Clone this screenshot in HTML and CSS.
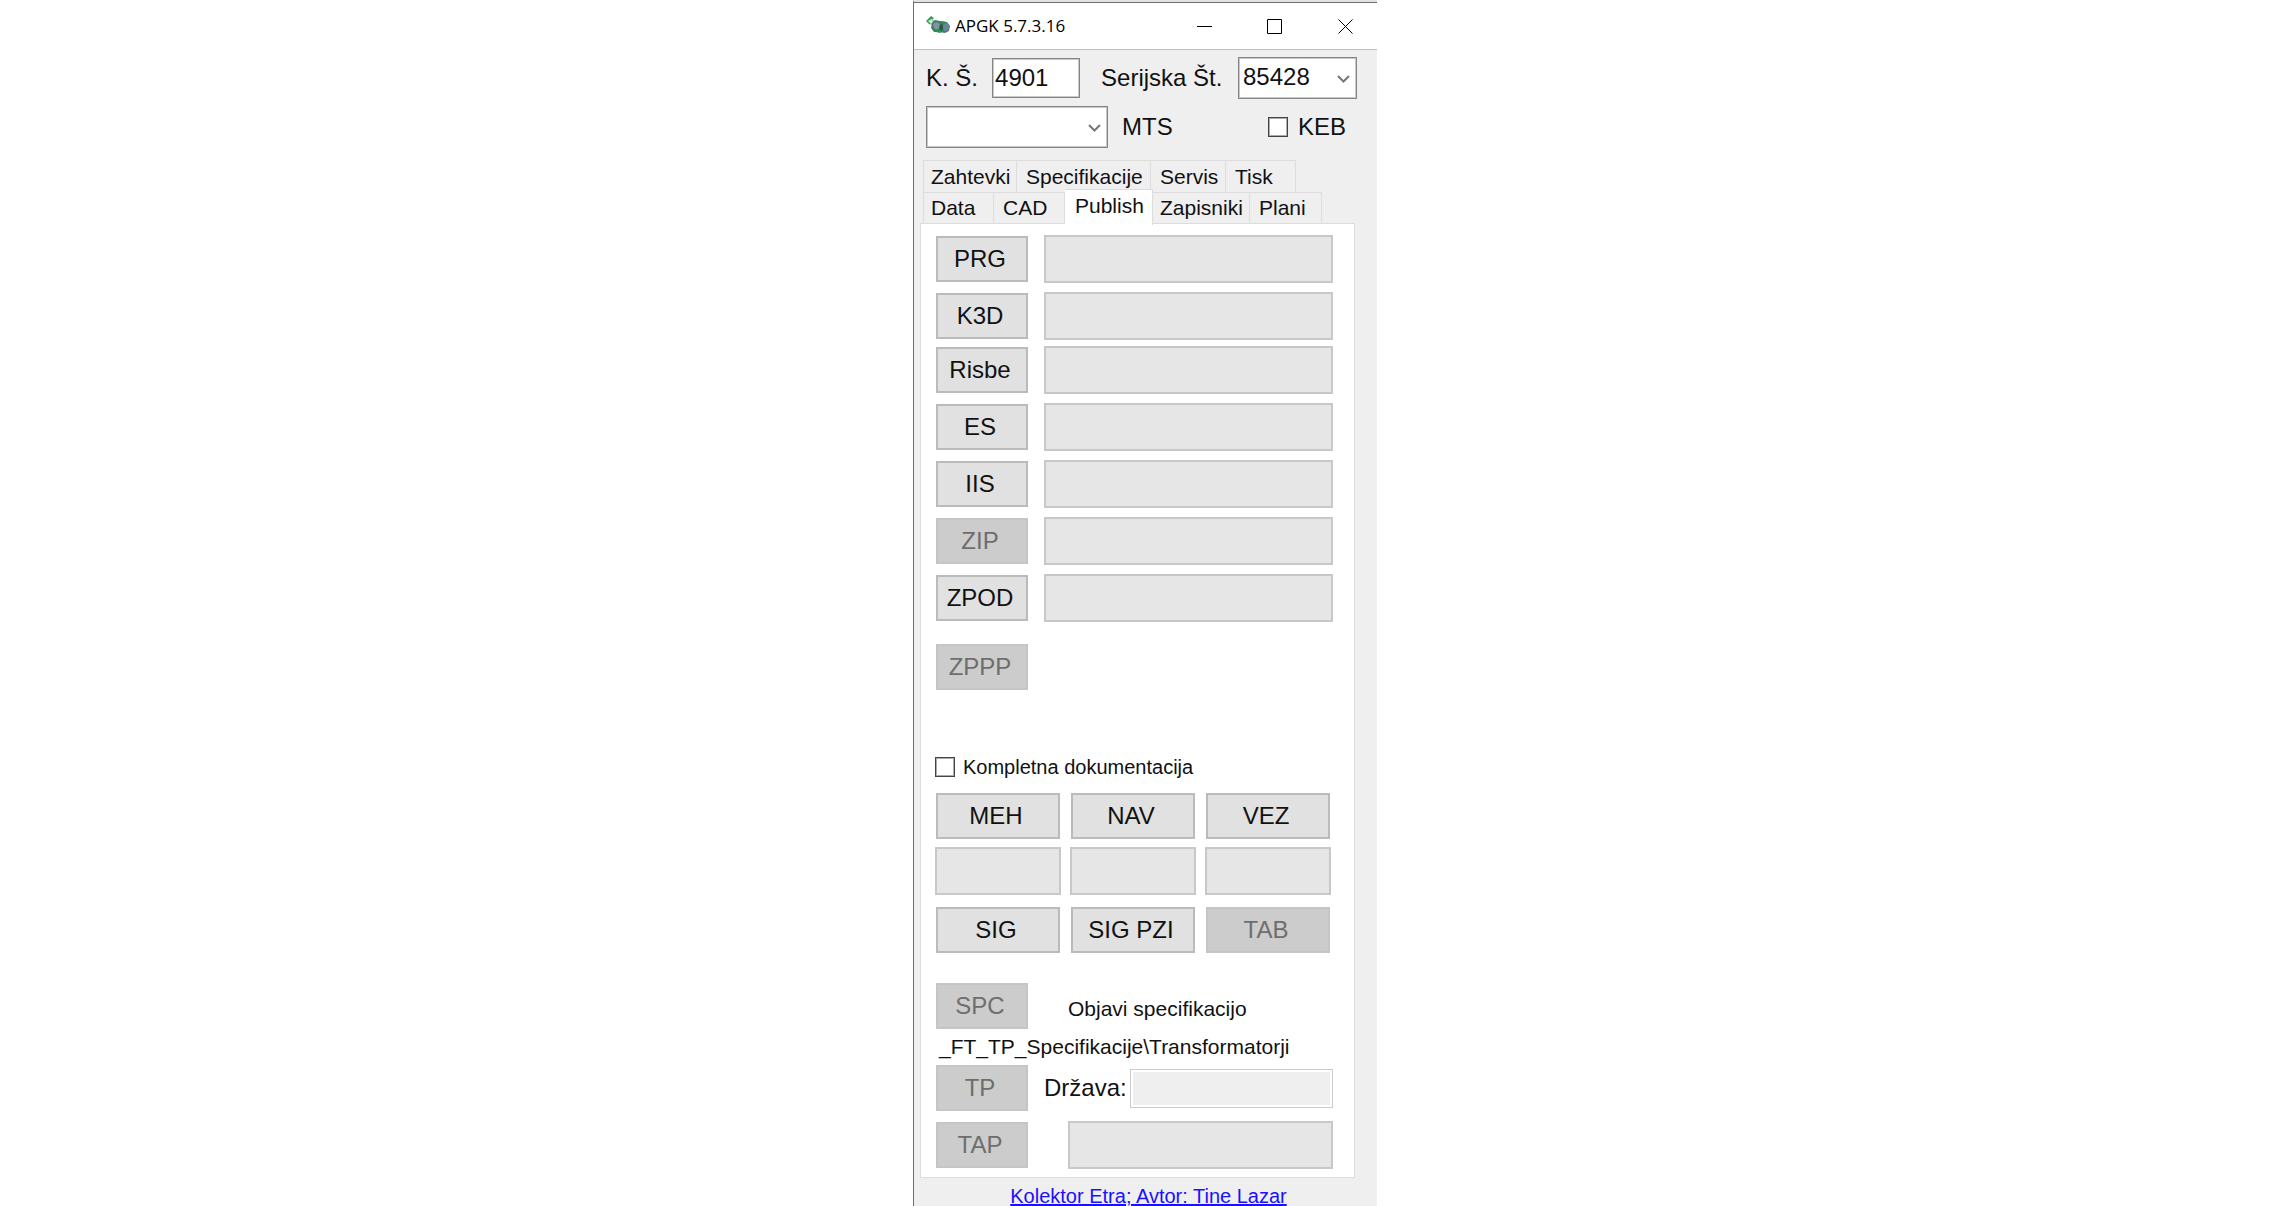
FILE: index.html
```
<!DOCTYPE html>
<html lang="sl">
<head>
<meta charset="utf-8">
<title>APGK 5.7.3.16</title>
<link rel="stylesheet" href="styles.css">
</head>
<body>
<div class="window">
  <header class="titlebar">
    <svg class="app-icon" viewBox="0 0 24 18" aria-hidden="true">
      <path d="M0 5L5 0l3 2-2 2 3 1-2 4-4-1z" fill="#2fa05a"/>
      <path d="M2 5l4-2 1 3-2 2z" fill="#d5eeda"/>
      <path d="M6 7l3-3 5 1 7 1 3 4-1 5-4 2-6-1-5 0-3-4z" fill="#4d7a66"/>
      <path d="M7 8l3-2 4 2v4l-3 2-3-2z" fill="#7d98a4"/>
      <ellipse cx="20" cy="11" rx="3" ry="4" fill="#6886a0"/>
      <path d="M9 14l5-2 3 3-3 2-4-1zM15 5l5 1-2 3-3-1z" fill="#1f9a4b"/>
      <path d="M14 8l3 1v4l-2 2-2-3z" fill="#305848"/>
    </svg>
    <h1 class="title">APGK 5.7.3.16</h1>
    <div class="window-buttons">
      <button class="window-button" type="button" aria-label="Minimize"><svg viewBox="0 0 15 15"><path d="M0 7.500h15"/></svg></button>
      <button class="window-button" type="button" aria-label="Maximize"><svg viewBox="0 0 15 15"><path d="M.5.5h14v14H.5z"/></svg></button>
      <button class="window-button" type="button" aria-label="Close"><svg viewBox="0 0 15 15"><path d="M.5.5l14 14M14.500.5l-14 14"/></svg></button>
    </div>
  </header>

  <form class="content">
    <div class="query">
      <label for="ks">K. Š.</label>
      <input class="input ks" id="ks" type="text" value="4901">
      <label class="serial-label" for="serial">Serijska Št.</label>
      <span class="select serial">
        <select id="serial"><option>85428</option></select>
        <svg class="chevron" viewBox="0 0 13 8" aria-hidden="true"><path d="M1 1l5.500 5.500L12 1"/></svg>
      </span>
    </div>
    <div class="query second">
      <span class="select mts">
        <select id="mts"><option></option></select>
        <svg class="chevron" viewBox="0 0 13 8" aria-hidden="true"><path d="M1 1l5.500 5.500L12 1"/></svg>
      </span>
      <label for="mts">MTS</label>
      <label class="check keb"><input type="checkbox">KEB</label>
    </div>

    <div class="tabs" role="tablist">
      <div class="tab-row upper">
        <button class="tab" type="button" role="tab">Zahtevki</button>
        <button class="tab wide" type="button" role="tab">Specifikacije</button>
        <button class="tab wide" type="button" role="tab">Servis</button>
        <button class="tab wide" type="button" role="tab">Tisk</button>
      </div>
      <div class="tab-row lower">
        <button class="tab" type="button" role="tab">Data</button>
        <button class="tab wide" type="button" role="tab">CAD</button>
        <button class="tab active" type="button" role="tab" aria-selected="true">Publish</button>
        <button class="tab" type="button" role="tab">Zapisniki</button>
        <button class="tab wide" type="button" role="tab">Plani</button>
      </div>
    </div>

    <div class="panel" role="tabpanel">
      <div class="jobs">
        <div class="job"><button class="button" type="button">PRG</button><progress value="0" aria-label="PRG"></progress></div>
        <div class="job tight"><button class="button" type="button">K3D</button><progress value="0" aria-label="K3D"></progress></div>
        <div class="job"><button class="button" type="button">Risbe</button><progress value="0" aria-label="Risbe"></progress></div>
        <div class="job"><button class="button" type="button">ES</button><progress value="0" aria-label="ES"></progress></div>
        <div class="job"><button class="button" type="button">IIS</button><progress value="0" aria-label="IIS"></progress></div>
        <div class="job"><button class="button" type="button" disabled>ZIP</button><progress value="0" aria-label="ZIP"></progress></div>
        <div class="job"><button class="button" type="button">ZPOD</button><progress value="0" aria-label="ZPOD"></progress></div>
      </div>
      <div class="job archive"><button class="button" type="button" disabled>ZPPP</button></div>

      <label class="check complete"><input type="checkbox">Kompletna dokumentacija</label>

      <div class="grid">
        <button class="button" type="button">MEH</button>
        <button class="button" type="button">NAV</button>
        <button class="button" type="button">VEZ</button>
      </div>
      <div class="grid meters">
        <progress value="0" aria-label="MEH"></progress>
        <progress value="0" aria-label="NAV"></progress>
        <progress value="0" aria-label="VEZ"></progress>
      </div>
      <div class="grid">
        <button class="button" type="button">SIG</button>
        <button class="button" type="button">SIG PZI</button>
        <button class="button" type="button" disabled>TAB</button>
      </div>

      <div class="job publish">
        <button class="button" type="button" disabled>SPC</button>
        <span class="note">Objavi specifikacijo</span>
      </div>
      <p class="path">_FT_TP_Specifikacije\Transformatorji</p>
      <div class="job country">
        <button class="button" type="button" disabled>TP</button>
        <label for="country">Država:</label>
        <input class="country-input" id="country" type="text" disabled>
      </div>
      <div class="job tap">
        <button class="button" type="button" disabled>TAP</button>
        <progress value="0" aria-label="TAP"></progress>
      </div>
    </div>
    <a class="credit" href="#">Kolektor Etra; Avtor: Tine Lazar</a>
  </form>
</div>
</body>
</html>
```
FILE: styles.css
```
* { box-sizing: border-box; }

body {
  margin: 0;
  background: #fff;
  color: #111;
  font: 24px/28px "Liberation Sans", Arial, sans-serif;
}

.window {
  max-width: 464px;
  min-height: 100vh;
  margin: 0 auto;
  overflow: hidden;
  background: #efefef;
  border-left: 1px solid #6e6e6e;
  border-top: 2px solid #e2e2e2;
}

button, input, select { font: inherit; color: inherit; margin: 0; }

.titlebar {
  display: flex;
  align-items: center;
  height: 48px;
  padding-left: 12px;
  background: #fff;
  border-top: 1px solid #6e6e6e;
  border-bottom: 1px solid #c0c0c0;
}
.app-icon { width: 24px; height: 18px; margin: 0 5px 2px 0; }
.title {
  margin: 0 auto 0 0;
  color: #000;
  font: 17px/24px "Open Sans", "Noto Sans", sans-serif;
}
.window-buttons { display: flex; }
.window-button {
  display: grid;
  place-items: center;
  width: 70px;
  height: 46px;
  padding: 0;
  border: 0;
  background: none;
}
.window-button:last-child { width: 72px; padding-right: 8px; padding-left: 8px; justify-items: center; }
.window-button svg { width: 15px; height: 15px; fill: none; stroke: #000; }
.window-buttons { margin-right: -4px; }

.content { display: flex; flex-direction: column; padding: 7px 22px 0 6px; }

.query {
  display: flex;
  align-items: center;
  height: 42px;
  padding-left: 6px;
}
.second { margin-top: 7px; }
.input {
  height: 40px;
  padding: 0 2px;
  background: #fff;
  border: 1px solid #858585;
  outline: 1px solid #c8c8c8;
  outline-offset: -2px;
}
.ks { width: 88px; margin-left: 14px; }
.serial-label { margin-left: 21px; }
.select { position: relative; display: block; height: 42px; }
.select select {
  appearance: none;
  width: 100%;
  height: 100%;
  padding: 0 24px 2px 4px;
  background: #fff;
  border: 1px solid #858585;
  outline: 1px solid #c8c8c8;
  outline-offset: -2px;
  border-radius: 0;
}
.chevron {
  position: absolute;
  right: 7px;
  top: 18px;
  width: 13px;
  height: 8px;
  fill: none;
  stroke: #777;
  stroke-width: 2;
  pointer-events: none;
}
.serial { width: 119px; margin: 0 -2px 0 auto; }
.mts { width: 182px; margin-right: 14px; }

.check { display: flex; align-items: center; gap: 10px; }
.check input {
  appearance: none;
  width: 20px;
  height: 20px;
  background: #fff;
  border: 1px solid #444;
  outline: 1px solid #aaa;
  outline-offset: -2px;
}
.keb { margin-left: auto; padding-right: 9px; }

.tabs { padding: 12px 0 0 3px; font-size: 21px; line-height: 24px; }
.tab-row { display: grid; height: 32px; }
.upper { grid-template-columns: 94px 134px 75px 70px; }
.lower { grid-template-columns: 71px 71px 88px 97px 72px; height: 31px; }
.tab {
  padding: 0 0 0 7px;
  text-align: left;
  white-space: nowrap;
  background: #efefef;
  border: 1px solid #dcdcdc;
  border-width: 1px 1px 0 0;
}
.tab:first-child { border-left-width: 1px; }
.tab.wide { padding-left: 9px; }
.tab.active {
  z-index: 1;
  margin: -3px 0 -2px;
  padding: 0 0 4px 10px;
  background: #fff;
}

.panel {
  padding: 11px 21px 8px 15px;
  background: #fff;
  border: 1px solid #dcdcdc;
}
.jobs { display: grid; gap: 9px; }
.job { display: flex; align-items: center; height: 48px; }
.tight { margin-bottom: -3px; }
.job .button { width: 92px; }
.job progress { flex: 1; margin-left: 16px; }
.button {
  height: 46px;
  padding: 0 4px 0 0;
  background: #e1e1e1;
  border: 2px solid #bbb;
}
.button:disabled {
  color: #6e6e6e;
  background: #ccc;
  border-color: #c5c5c5;
}
progress {
  appearance: none;
  display: block;
  width: 100%;
  height: 48px;
  background: #e6e6e6;
  border: 2px solid #c8c8c8;
}
progress::-webkit-progress-bar { background: #e6e6e6; }

.archive { margin-top: 21px; }
.complete {
  height: 24px;
  margin: 64px 0 14px -1px;
  gap: 8px;
  font-size: 20px;
}
.grid {
  display: grid;
  grid-template-columns: repeat(3, 1fr);
  gap: 11px;
  padding-right: 3px;
}
.meters { gap: 9px; margin: 8px 0 12px -1px; padding-right: 2px; }

.publish { margin-top: 29px; }
.note { padding: 6px 0 0 40px; font-size: 21px; }
.path { margin: 0; padding-left: 3px; font-size: 21px; line-height: 34px; }
.country label { margin: 0 3px 0 16px; }
.country-input {
  flex: 1;
  min-width: 0;
  height: 39px;
  background: #efefef;
  border: 1px solid #ccc;
  box-shadow: inset 0 0 0 2px #fff;
}
.tap { margin-top: 9px; }
.tap progress { margin-left: 40px; }

.credit {
  align-self: center;
  margin: 6px 0 0 22px;
  color: #1a10ff;
  font-size: 20px;
  line-height: 24px;
}
```
